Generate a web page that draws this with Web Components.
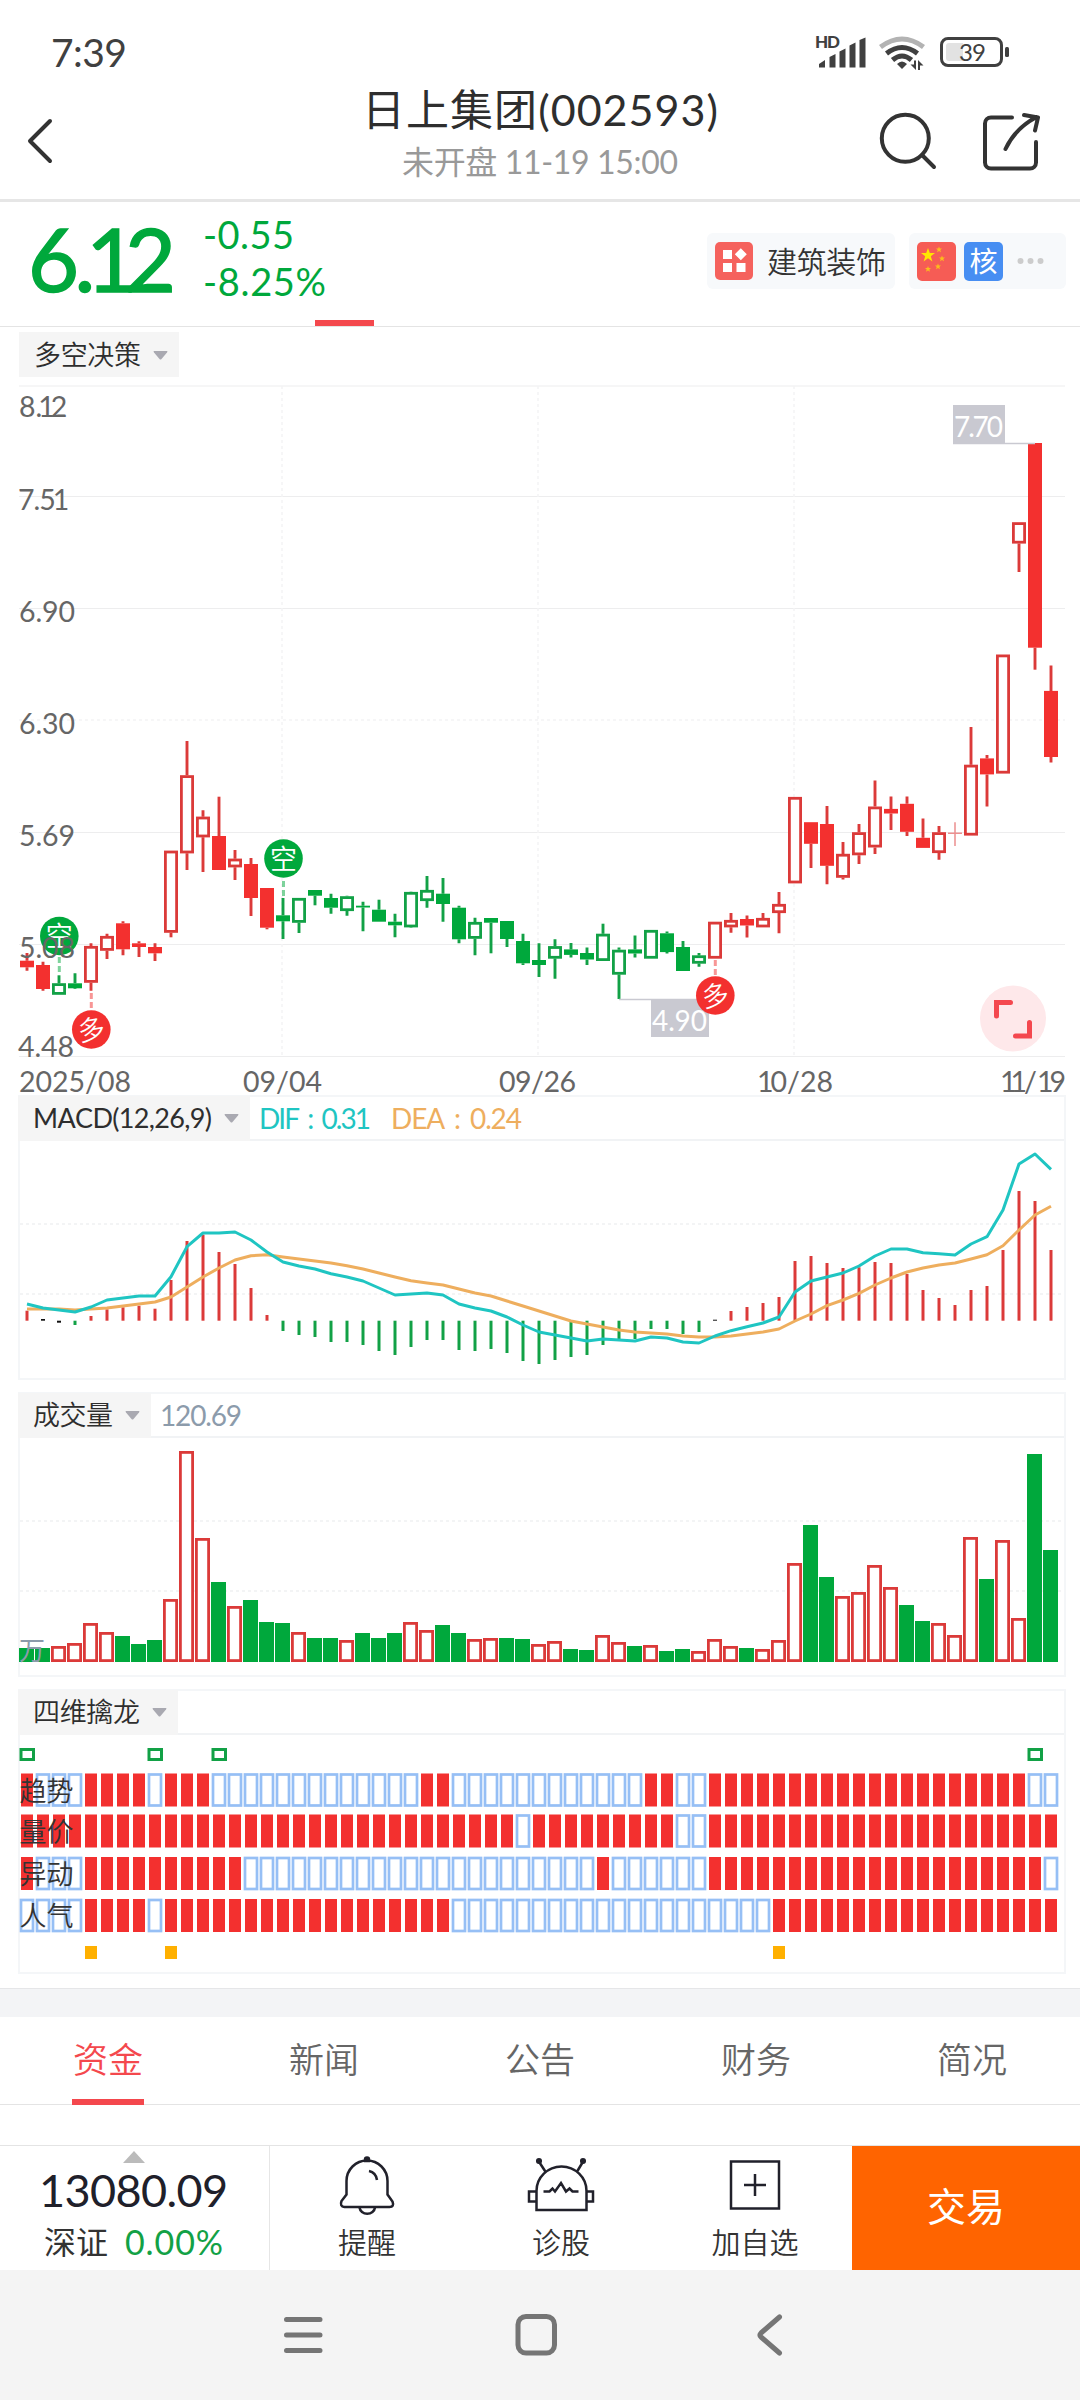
<!DOCTYPE html>
<html lang="zh-CN">
<head>
<meta charset="utf-8">
<meta name="viewport" content="width=1080">
<title>日上集团(002593)</title>
<style>
  html, body {
    margin: 0;
    background: #fff;
  }

  body {
    width: 1080px;
    font-family: Lato, "Noto Sans CJK SC", sans-serif;
    font-kerning: none;
    color: #333;
    --up: #f3302f;
    --up-line: #db3a39;
    --down: #00a83c;
    --down-line: #12a146;
    --accent: #f4484d;
  }
</style>
</head>
<body>
<stock-page></stock-page>

<script>
const SLOTS = 65;
const centerX = (i) => 27 + 16 * i;

/** Registers an element whose shadow root is cloned from one template. */
function define(name, html, setup) {
  const template = document.createElement("template");
  template.innerHTML = html;

  customElements.define(name, class extends HTMLElement {
    constructor() {
      super();
      this.attachShadow({ mode: "open" });
      this.shadowRoot.appendChild(template.content.cloneNode(true));
    }

    connectedCallback() {
      setup?.call(this, this.shadowRoot);
    }
  });
}

/* Text whose tracking is adjusted until it takes the given width. */
define("fit-text", /* html */ `
  <style>
    :host { display: inline-block; white-space: nowrap; }
    span { display: inline-block; }
  </style>
  <span><slot></slot></span>
`, function (root) {
  const span = root.querySelector("span");
  const width = Number(this.getAttribute("width"));
  const gaps = Math.max(this.textContent.length - 1, 1);
  const spacing = (width - span.getBoundingClientRect().width) / gaps;
  span.style.letterSpacing = `${spacing}px`;
  span.style.marginRight = `${-spacing}px`;
});

define("status-bar", /* html */ `
  <style>
    :host {
      display: flex;
      justify-content: space-between;
      align-items: center;
      height: 80px;
      padding: 24px 70px 0 51px;
      box-sizing: border-box;
      color: #404040;
    }
    .time { font-size: 39px; line-height: 1; }
  </style>
  <fit-text class="time" width="76">7:39</fit-text>
  <svg width="196" height="40" viewBox="814 32 196 40" fill="#404040">
    <text x="815" y="48" font-size="17" font-weight="900" textLength="25">HD</text>
    <path d="M819 67.500V64l6-4v7.500zM829.500 67.500V57l6-3v13.500zM839.500 67.500V51.500l6-3v19zM849.500 67.500V45.500l6-3v25zM859.500 67.500V40l6-2.500v30z"/>
    <g fill="none" stroke-width="5">
      <path d="M880.500 47q21.500-16 43 0" stroke="#b3b3b3"/>
      <path d="M886.500 53.500q15.500-12 31 0M892.500 60q9.500-8 19 0" stroke="#404040"/>
    </g>
    <path d="M897 64q5-5 10 0l-5 5z"/>
    <path d="M914 60.500h2V70l-5.500-5.500h3.500zM918 70h2v-4.500h3.500L918 60z"/>
    <rect x="941.500" y="38.500" width="60" height="27" rx="6.500" fill="none" stroke="#404040" stroke-width="3"/>
    <path d="M949 43h14v18h-14a3 3 0 0 1-3-3V46a3 3 0 0 1 3-3z" fill="#e2e2e2"/>
    <rect x="1005" y="47" width="4" height="10" rx="1.500"/>
    <text x="959" y="61" font-size="24" textLength="27">39</text>
  </svg>
`);

define("app-header", /* html */ `
  <style>
    :host {
      display: grid;
      grid-template-columns: 240px 1fr 240px;
      height: 122px;
      box-sizing: border-box;
      border-bottom: 3px solid #e6e6e6;
    }
    .title { text-align: center; padding-top: 5px; }
    .name { font-size: 43px; line-height: 50px; color: #2e2e2e; display: block; }
    .time { font-size: 32px; line-height: 40px; margin-top: 7px; color: #999; display: block; }
    svg { fill: none; stroke: #333; stroke-width: 4; stroke-linecap: round; stroke-linejoin: round; }
  </style>
  <svg width="240" height="119" viewBox="0 80 240 119"><path d="M50 121 30 141l20 20"/></svg>
  <div class="title">
    <div class="name"><fit-text width="356">日上集团(002593)</fit-text></div>
    <div class="time"><fit-text width="276">未开盘 11-19 15:00</fit-text></div>
  </div>
  <svg width="240" height="119" viewBox="840 80 240 119">
    <circle cx="905.300" cy="138.300" r="23.500"/>
    <path d="m922 155 12 12"/>
    <path d="M1012 117.500h-21a6 6 0 0 0-6 6v39a6 6 0 0 0 6 6h39a6 6 0 0 0 6-6V142"/>
    <path d="M1005.500 149q9-20 31-32M1024 115l14 2.500-3 13"/>
  </svg>
`);

define("quote-panel", /* html */ `
  <style>
    :host {
      display: flex;
      align-items: center;
      position: relative;
      height: 125px;
      box-sizing: border-box;
      border-bottom: 1px solid #e4e4e4;
      padding: 0 14px 6px 28px;
      color: var(--down);
    }
    .price { font-size: 88px; line-height: 1; margin-bottom: 7px; -webkit-text-stroke: 1.500px; }
    .price i { font-style: normal; margin: 0 -.09em 0 -.05em; }
    .delta {
      display: flex;
      flex-direction: column;
      gap: 7px;
      margin: 0 0 7px 27px;
      font-size: 38px;
      line-height: 40px;
      flex: 1;
    }
    .chip {
      display: flex;
      align-items: center;
      height: 56px;
      border-radius: 6px;
      background: #f7f9fb;
      color: #333;
    }
    .sector { width: 188px; margin-right: 14px; gap: 14px; padding-left: 8px; box-sizing: border-box; font-size: 30px; font-weight: 350; }
    .sector fit-text { margin-bottom: 2px; }
    .tags { width: 157px; gap: 8px; padding-left: 8px; box-sizing: border-box; }
    .badge {
      width: 39px;
      height: 39px;
      border-radius: 5px;
      background: #478ef2;
      color: #fff;
      font-size: 28px;
      line-height: 38px;
      text-align: center;
    }
    .mark {
      position: absolute;
      left: 315px;
      bottom: 0;
      width: 59px;
      height: 6px;
      background: var(--accent);
    }
  </style>
  <fit-text class="price" width="148">6.<i>1</i>2</fit-text>
  <div class="delta">
    <fit-text width="91">-0.55</fit-text>
    <fit-text width="123">-8.25%</fit-text>
  </div>
  <div class="chip sector">
    <svg width="38" height="38"><rect width="38" height="38" rx="5" fill="#f5625d"/><path d="M8 8h9v9H8zM8 21h9v9H8zM21.500 21h9v9h-9zM25.800 6.300l6 6-6 6-6-6z" fill="#fff"/></svg>
    <fit-text width="119">建筑装饰</fit-text>
  </div>
  <div class="chip tags">
    <svg width="39" height="39">
      <rect width="39" height="39" rx="5" fill="#f65c55"/>
      <path d="m11 6 1.800 5h5.200l-4.200 3.200 1.600 5.300-4.400-3.200-4.400 3.200 1.600-5.300L4 11h5.200z" fill="#ffe600"/>
      <g fill="#fcbc1c">
        <path id="s" d="m22 4.500.8 2h2.200l-1.700 1.500.7 2.200-2-1.300-2 1.300.7-2.200L19 6.500h2.200z"/>
        <use href="#s" x="3" y="9"/><use href="#s" x="-1" y="17"/><use href="#s" x="-11" y="19.500"/>
      </g>
    </svg>
    <div class="badge">核</div>
    <svg width="40" height="12" fill="#ccc"><circle cx="9.500" cy="6" r="3"/><circle cx="19.500" cy="6" r="3"/><circle cx="29.500" cy="6" r="3"/></svg>
  </div>
  <div class="mark"></div>
`);

define("indicator-picker", /* html */ `
  <style>
    :host {
      display: inline-flex;
      align-items: center;
      gap: 12px;
      box-sizing: border-box;
      padding: 0 11px 0 15px;
      height: 45px;
      background: #f5f5f5;
      color: #2e2e2e;
      font-size: 27px;
      font-weight: 350;
      line-height: 44px;
    }
  </style>
  <slot></slot>
  <svg width="15" height="10"><path d="M1 1h13q1 0 0 1.500L8.500 9q-1 1-2 0L1 2.500Q0 1 1 1z" fill="#a9a9b1"/></svg>
`);

/* Framed indicator chart: a picker, its current values and the plot. */
define("chart-panel", /* html */ `
  <style>
    :host {
      display: block;
      box-sizing: border-box;
      height: 285px;
      margin: 0 14px 12px 18px;
      border: 2px solid #f4f6f8;
    }
    header {
      display: flex;
      align-items: center;
      height: 42px;
      border-bottom: 2px solid #f1f3f5;
      font-size: 28px;
    }
    ::slotted(indicator-picker) { margin-left: -2px; }
  </style>
  <header><slot name="picker"></slot><slot name="values"></slot></header>
  <slot></slot>
`);

// [high, body top, body bottom, low, colour and fill]; lower case = hollow
const CANDLES = [
  [953, 960.7, 967.3, 970.7, "R"], [961.7, 965, 989, 990.7, "R"], [975.3, 983.3, 994.7, 994.7, "g"],
  [973.3, 983.3, 988.3, 989, "G"], [943.3, 946, 982.7, 990.7, "r"], [933.7, 936, 950.7, 959, "r"],
  [921.3, 923.3, 949.3, 955.3, "R"], [941.3, 943.3, 947, 957, "R"], [943.3, 947, 953.3, 961, "R"],
  [850.7, 850.7, 932.7, 937.3, "r"], [741, 775.3, 853.3, 870, "r"], [810.3, 816.7, 837.3, 872, "r"],
  [796.7, 836, 870, 870, "R"], [850, 858.7, 867.3, 880, "r"], [858, 864, 898, 916, "R"],
  [888, 888, 927.7, 929.3, "R"], [898, 915.3, 921.3, 939, "G"], [898, 898, 922.7, 933, "g"],
  [890, 890, 895.7, 905.3, "G"], [893.7, 898, 907.7, 913.7, "G"], [895.7, 896.3, 911, 915.7, "g"],
  [901.7, 905.7, 907.5, 931.3, "G"], [899.7, 909.7, 921.7, 921.7, "G"], [913.7, 921.7, 925.3, 937.3, "G"],
  [891.7, 892, 927.3, 927.7, "g"], [876, 890, 901, 907.7, "g"], [878, 893.7, 904, 921.7, "G"],
  [905.7, 907.7, 939.3, 943.3, "G"], [917.7, 922, 938.7, 955.3, "g"], [918, 918, 922.7, 953.3, "G"],
  [921, 921, 939, 947, "G"], [933.7, 941, 963.3, 965, "G"], [943.3, 960, 965, 977, "G"],
  [939.3, 946.2, 958.6, 978.8, "g"], [943, 949.4, 954.9, 957.6, "G"], [947.5, 953, 959.5, 965, "G"],
  [923.7, 933.8, 960.9, 960.9, "g"], [947.5, 949.8, 974.6, 999, "g"], [935.6, 949.4, 953.5, 957.6, "G"],
  [930, 930, 958.6, 958.6, "g"], [931.5, 933.3, 952.1, 953.5, "G"], [941, 947, 971, 971, "G"],
  [953, 955.4, 963.6, 966.8, "g"], [921.8, 921.8, 958.6, 958.6, "r"], [913, 920, 927.3, 932.8, "r"],
  [915.4, 919, 925.5, 937.4, "R"], [913, 918, 927.3, 927.3, "r"], [892, 904, 913, 933.3, "r"],
  [797, 797, 883.3, 883.3, "r"], [822.2, 822.2, 843.8, 868, "R"], [806, 824, 865.8, 884.2, "R"],
  [842, 853.9, 877.7, 879.6, "r"], [824, 832.3, 855.2, 864, "r"], [780.4, 806.6, 847.4, 853.9, "r"],
  [796.5, 808.9, 813.5, 830, "R"], [796.5, 803.8, 831.8, 836, "R"], [818.5, 837.8, 847.9, 847.9, "R"],
  [825.9, 832.3, 853, 859.8, "r"], [822.2, 832.8, 833.8, 846, "x"], [727, 764.8, 835.5, 835.5, "r"],
  [755, 758.4, 774.4, 806.6, "R"], [654.6, 654.6, 773.5, 773.5, "r"], [522.3, 522.3, 543.5, 572, "r"],
  [443, 443, 647.7, 669.7, "R"], [665.6, 690.9, 757, 762.5, "R"],
];

function drawCandle([high, top, bottom, low, kind], i) {
  const x = centerX(i);
  const side = kind.toUpperCase() === "G" ? "down" : "up";
  const line = `var(--${side}-line)`;

  if (kind === "x") { // open equals close
    return `<path d="M${x - 7} 833.300h14M${x} ${high}V${low}" stroke="#ec8f8f" stroke-width="1.500"/>`;
  }

  const wick = `<path d="M${x} ${high}V${top}M${x} ${bottom}V${low}" stroke="${line}" stroke-width="2.900"/>`;
  if (kind === kind.toUpperCase()) {
    return `${wick}<rect x="${x - 7}" y="${top}" width="14" height="${bottom - top}" fill="var(--${side})"/>`;
  }
  return `${wick}<rect x="${x - 5.6}" y="${top + 1.3}" width="11.200" height="${Math.max(bottom - top - 2.6, 1)}" fill="#fff" stroke="${line}" stroke-width="2.800"/>`;
}

function drawSignal(x, y, text, color, from, to) {
  return `
    <path d="M${x} ${from}V${to}" stroke="${color}" stroke-width="3" stroke-dasharray="6 3" opacity=".5"/>
    <circle cx="${x}" cy="${y}" r="19.300" fill="${color}"/>
    <text x="${x}" y="${y + 10}" font-size="27" font-weight="350" fill="#fff" text-anchor="middle" transform="rotate(${text === "多" ? -10 : 0} ${x} ${y})">${text}</text>`;
}

define("candle-chart", /* html */ `
  <style>
    :host { display: block; height: 719px; }
    svg { display: block; overflow: visible; }
  </style>
  <svg width="1080" height="719" viewBox="0 376 1080 719"></svg>
`, function (root) {
  const solid = [386, 496.5, 608.5, 832.5, 944.5, 1056.5]
    .map((y) => `<path d="M19 ${y}H1065"/>`).join("");
  const dashed = [282, 538, 794].map((x) => `<path d="M${x} 386V1056"/>`).join("");

  // The figure 1 has wide side bearings, so labels with it are tightened by hand.
  const label = (text, x, y, fit) => `<text x="${x}" y="${y}" ${fit}>${text}</text>`;
  const prices = [
    label("8.12", 19, 417, 'dx="0 0 -4 -4"'),
    label("7.51", 18, 510, 'dx="0 -1 -1 -3"'),
    label("6.90", 19, 622, 'textLength="56"'),
    label("6.30", 19, 734, 'textLength="56"'),
    label("5.69", 19, 846, 'textLength="56"'),
    label("5.08", 19, 958, 'textLength="56"'),
    label("4.48", 18, 1057, 'textLength="56"'),
  ];
  const dates = [
    label("2025/08", 19, 1092, 'textLength="112"'),
    label("09/04", 243, 1092, 'textLength="79"'),
    label("09/26", 499, 1092, 'textLength="77"'),
    label("10/28", 757, 1092, 'dx="0 -3 0 0"'),
    label("11/19", 1000, 1092, 'dx="0 -6 -3 0 -4"'),
  ];

  root.querySelector("svg").innerHTML = `
    <g stroke="#ededee">${solid}</g>
    <g stroke="#f4f4f5" stroke-width="1.500" stroke-dasharray="3 3"><path d="M19 720H1065"/>${dashed}</g>
    ${CANDLES.map(drawCandle).join("")}
    <path d="M953 443.500H1035M619 999.500H700" stroke="#c9c9d1" stroke-width="1.500"/>
    <path d="M953 405h52v38.500h-52zM651 999.500h58v37.500h-58z" fill="#c9c9d1"/>
    <g font-size="28" fill="#fff"><text x="954" y="437" textLength="49">7.70</text><text x="652" y="1031" textLength="55">4.90</text></g>
    ${drawSignal(59.3, 936, "空", "#00a83c", 957, 975)}
    ${drawSignal(283.5, 858.5, "空", "#00a83c", 881, 898)}
    ${drawSignal(91.3, 1029.5, "多", "#f3302f", 993, 1012)}
    ${drawSignal(715.3, 995.5, "多", "#f3302f", 960, 976)}
    <g font-size="28.500" fill="#666">${prices.join("")}${dates.join("")}</g>
    <circle cx="1013" cy="1018.500" r="33" fill="#fee8ea"/>
    <path d="M996.500 1016V1002.500H1010.500M1029.500 1022.500V1036H1015.500" fill="none" stroke="#f4484f" stroke-width="5" stroke-linecap="round"/>`;
});

define("macd-chart", /* html */ `
  <style>:host, svg { display: block; overflow: visible; }</style>
  <svg width="1044" height="237" viewBox="20 1141 1044 237"></svg>
`, function (root) {
  // All series are kept at three units per pixel, counted from y = 1080.
  const ZERO = 722;
  const y = (v) => (1080 + v / 3).toFixed(1);
  const bars = [692, 717, 728, 735, 708, 688, 682, 677, 686, 600, 483, 464, 516, 552, 624, 705, 753, 765, 771, 786, 786, 795,
    813, 825, 801, 780, 780, 810, 813, 807, 819, 843, 852, 840, 831, 825, 795, 780, 777, 747, 747, 762, 756, 719, 693, 681,
    669, 651, 543, 528, 549, 564, 562, 546, 549, 582, 630, 654, 675, 630, 618, 510, 333, 363, 510];
  const dif = [672, 684, 690, 696, 681, 660, 654, 648, 648, 590, 500, 459, 459, 456, 480, 516, 546, 558, 567, 581, 591, 603,
    624, 645, 642, 639, 645, 672, 684, 693, 711, 735, 756, 765, 774, 783, 777, 780, 783, 771, 774, 786, 789, 768, 752, 740,
    729, 711, 636, 603, 591, 579, 558, 528, 507, 507, 518, 521, 525, 492, 470, 390, 252, 222, 268];
  const dea = [687, 687, 687, 690, 687, 684, 678, 672, 666, 651, 621, 591, 564, 540, 527, 524, 531, 537, 543, 549, 557, 567,
    579, 591, 602, 609, 615, 627, 639, 648, 663, 678, 693, 708, 723, 732, 741, 750, 756, 759, 762, 768, 771, 771, 768, 762,
    756, 747, 723, 702, 677, 660, 640, 615, 594, 576, 564, 555, 549, 537, 524, 497, 450, 405, 379];

  const drawBar = (v, i) => {
    const flat = Math.abs(v - ZERO) < 7;
    const color = flat ? "#111" : v < ZERO ? "var(--up-line)" : "var(--down-line)";
    return `<path d="M${centerX(i)} ${y(ZERO)}V${y(v)}" stroke="${color}" stroke-width="${flat ? 4 : 3}"/>`;
  };
  const points = (series) => series.map((v, i) => `${centerX(i)},${y(v)}`).join(" ");

  root.querySelector("svg").innerHTML = `
    <path d="M20 1224H1064M20 1294H1064" stroke="#f3f4f5" stroke-width="2" stroke-dasharray="3 3"/>
    ${bars.map(drawBar).join("")}
    <g fill="none" stroke-width="3" stroke-linejoin="round">
      <polyline points="${points(dea)}" stroke="#eeae5e"/>
      <polyline points="${points(dif)}" stroke="#1fc5c2"/>
    </g>`;
});

define("volume-chart", /* html */ `
  <style>:host, svg { display: block; overflow: visible; }</style>
  <svg width="1044" height="237" viewBox="20 1438 1044 237"></svg>
`, function (root) {
  const BASE = 1662;
  const tops = "G804 G804 R798 R789 R729 R756 G768 G792 G780 R657 R213 R474 G606 R678 G660 G726 G729 R756 G774 G774 R780 G759 "
    + "G774 G759 R726 R750 G735 G759 R777 R774 G774 G777 R792 R783 G807 G810 R765 R786 G798 R795 G813 G807 R813 R777 R798 "
    + "G804 R807 R780 R549 G435 G591 R648 R636 R555 R621 G675 G723 R729 R765 R471 G597 R480 R714 G222 G510";

  const bars = tops.split(" ").map((item, i) => {
    const top = 1380 + Number(item.slice(1)) / 3;
    const x = centerX(i) - 8;
    return item[0] === "G"
      ? `<rect x="${x}" y="${top}" width="15" height="${BASE - top}" fill="var(--down)"/>`
      : `<rect x="${x + 1.4}" y="${top + 1.4}" width="12.200" height="${BASE - top - 2.8}" fill="#fff" stroke="var(--up-line)" stroke-width="2.800"/>`;
  });

  root.querySelector("svg").innerHTML = `
    <path d="M20 1521H1064M20 1591H1064" stroke="#f3f4f5" stroke-width="2" stroke-dasharray="3 3"/>
    ${bars.join("")}
    <text x="19" y="1660" font-size="26" fill="#8c9bab">万</text>`;
});

define("signal-chart", /* html */ `
  <style>:host, svg { display: block; overflow: visible; }</style>
  <svg width="1044" height="237" viewBox="20 1735 1044 237"></svg>
`, function (root) {
  // Slots left hollow in each row, as [first, last].
  const rows = [
    { name: "趋势", y: 1773.5, hollow: [[1, 3], [8, 8], [12, 24], [27, 38], [41, 42], [63, 64]] },
    { name: "量价", y: 1814.5, hollow: [[31, 31], [41, 42]] },
    { name: "异动", y: 1857, hollow: [[1, 3], [14, 35], [37, 42], [64, 64]] },
    { name: "人气", y: 1899, hollow: [[0, 3], [8, 8], [27, 46]] },
  ];

  const drawRow = ({ name, y, hollow }) => {
    let out = "";
    for (let i = 0; i < SLOTS; i++) {
      const x = centerX(i) - 6;
      out += hollow.some(([a, b]) => i >= a && i <= b)
        ? `<rect x="${x}" y="${y + 1}" width="12" height="31" fill="#fff" stroke="#96bff5" stroke-width="2.700"/>`
        : `<rect x="${x}" y="${y}" width="12" height="33" fill="var(--up)"/>`;
    }
    return `${out}<text x="19.500" y="${y + 27}" font-size="27" font-weight="350" textLength="54" fill="#333">${name}</text>`;
  };

  root.querySelector("svg").innerHTML = `
    ${[0, 8, 12, 63].map((i) => `<rect x="${centerX(i) - 6}" y="1749.500" width="12.500" height="10" fill="#fff" stroke="#12a146" stroke-width="3"/>`).join("")}
    ${rows.map(drawRow).join("")}
    ${[4, 9, 47].map((i) => `<rect x="${centerX(i) - 6}" y="1946" width="12" height="13" fill="#ffb000"/>`).join("")}`;
});

define("info-tabs", /* html */ `
  <style>
    :host {
      display: grid;
      grid-template-columns: repeat(5, 1fr);
      height: 88px;
      box-sizing: border-box;
      border-bottom: 1px solid #e4e4e4;
      font-size: 35px;
      font-weight: 350;
      line-height: 85px;
      color: #666;
      text-align: center;
    }
    ::slotted([aria-selected="true"]) {
      justify-self: center;
      width: 72px;
      height: 82px;
      color: var(--accent);
      border-bottom: 6px solid var(--accent);
    }
  </style>
  <slot></slot>
`);

define("tool-button", /* html */ `
  <style>
    :host {
      display: flex;
      flex-direction: column;
      align-items: center;
      gap: 4px;
      padding-top: 7px;
      font-size: 29px;
      font-weight: 350;
      line-height: 40px;
      color: #333;
    }
  </style>
  <slot name="icon"></slot>
  <slot></slot>
`);

define("action-bar", /* html */ `
  <style>
    :host {
      display: grid;
      grid-template-columns: 270px repeat(3, 194px) 1fr;
      height: 125px;
      box-sizing: border-box;
      border-top: 1px solid #e4e4e4;
    }
    .index {
      display: flex;
      flex-direction: column;
      align-items: center;
      border-right: 1px solid #e6e6e6;
      padding: 5px 2px 0 0;
      box-sizing: border-box;
    }
    .value { font-size: 45px; line-height: 48px; margin-top: 3px; color: #20202a; }
    .row { display: flex; gap: 17px; font-size: 32px; line-height: 40px; margin-top: 8px; }
    .row .pct { color: var(--down-line); font-size: 34px; }
    .trade {
      background: #ff6400;
      color: #fff;
      font-size: 39px;
      line-height: 121px;
      text-align: center;
    }
    svg { fill: none; stroke: #21212b; stroke-width: 2.500; }
  </style>
  <div class="index">
    <svg width="22" height="12"><path d="M11 0 22 12H0z" fill="#bbb" stroke="none"/></svg>
    <fit-text class="value" width="189">13080.09</fit-text>
    <div class="row"><span>深证</span><fit-text class="pct" width="98">0.00%</fit-text></div>
  </div>
  <tool-button>
    <svg slot="icon" width="66" height="66" viewBox="334 2153 66 66">
      <path d="M346.500 2194.500V2181a20.500 20.500 0 0 1 41 0v13.500l5 7q2 5.500-3 5.500h-45q-5-.5-3-6z"/>
      <path d="M359.500 2207.500a7.800 7 0 0 0 15.500 0M369 2171q7 1.500 8 9"/>
      <path d="M365 2161v-1.500a2 2 0 0 1 4 0v1.500z" fill="#21212b"/>
    </svg>
    提醒
  </tool-button>
  <tool-button>
    <svg slot="icon" width="70" height="66" viewBox="526 2153 70 66">
      <path d="M536.500 2210V2191a25 24.500 0 0 1 50 0v19zM536 2191.500h-7v10h7M587 2191.500h6v10h-6M539.500 2162.500l6.500 10M582.500 2162.500l-6 10"/>
      <path d="M543.500 2191.500h6l3-3 2.500 3 6-8.500 5 8.500 3.500-3 3 3h6"/>
      <circle cx="539" cy="2161" r="1.800" fill="#21212b"/><circle cx="583" cy="2161" r="1.800" fill="#21212b"/>
    </svg>
    诊股
  </tool-button>
  <tool-button>
    <svg slot="icon" width="66" height="66" viewBox="722 2153 66 66">
      <path d="M731 2161.500h48v47h-48zM755 2174v22M744 2185h22"/>
    </svg>
    加自选
  </tool-button>
  <div class="trade">交易</div>
`);

define("nav-bar", /* html */ `
  <style>
    :host { display: block; height: 130px; background: #f4f4f4; }
    svg { display: block; fill: none; stroke: #757575; stroke-width: 5; stroke-linecap: round; stroke-linejoin: round; }
  </style>
  <svg width="1080" height="130" viewBox="0 2270 1080 130">
    <path d="M286.500 2319.500h33.500M286.500 2335h33.500M286.500 2350.500h33.500"/>
    <rect x="518" y="2316.500" width="36.500" height="36.500" rx="8"/>
    <path d="M779.500 2317l-18.500 16q-2 2 0 4l18.500 16"/>
  </svg>
`);

define("stock-page", /* html */ `
  <style>
    :host { display: block; width: 1080px; height: 2400px; overflow: hidden; }
    .main-picker { display: flex; height: 49px; padding: 5px 0 0 19px; box-sizing: border-box; }
    .divider { height: 28px; margin-top: 14px; border-top: 1px solid #e5e6e8; background: #f3f4f6; }
    .values { display: flex; gap: 20px; padding-left: 9px; }
    .latin { font-weight: 400; }
    .dif, .dea { word-spacing: 4px; }
    .dif { color: #1fc5c2; }
    .dea { color: #eeae5e; }
    .vol { color: #8c9bab; }
    chart-panel:last-of-type { margin-bottom: 0; }
    info-tabs { margin-bottom: 40px; }
  </style>
  <status-bar></status-bar>
  <app-header></app-header>
  <quote-panel></quote-panel>
  <div class="main-picker"><indicator-picker><fit-text width="107">多空决策</fit-text></indicator-picker></div>
  <candle-chart></candle-chart>
  <chart-panel>
    <indicator-picker slot="picker"><fit-text class="latin" width="179">MACD(12,26,9)</fit-text></indicator-picker>
    <div slot="values" class="values">
      <fit-text class="dif" width="112">DIF : 0.31</fit-text>
      <fit-text class="dea" width="131">DEA : 0.24</fit-text>
    </div>
    <macd-chart></macd-chart>
  </chart-panel>
  <chart-panel>
    <indicator-picker slot="picker"><fit-text width="80">成交量</fit-text></indicator-picker>
    <div slot="values" class="values"><fit-text class="vol" width="82">120.69</fit-text></div>
    <volume-chart></volume-chart>
  </chart-panel>
  <chart-panel>
    <indicator-picker slot="picker"><fit-text width="107">四维擒龙</fit-text></indicator-picker>
    <signal-chart></signal-chart>
  </chart-panel>
  <div class="divider"></div>
  <info-tabs>
    <span aria-selected="true">资金</span>
    <span>新闻</span>
    <span>公告</span>
    <span>财务</span>
    <span>简况</span>
  </info-tabs>
  <action-bar></action-bar>
  <nav-bar></nav-bar>
`);
</script>
</body>
</html>
